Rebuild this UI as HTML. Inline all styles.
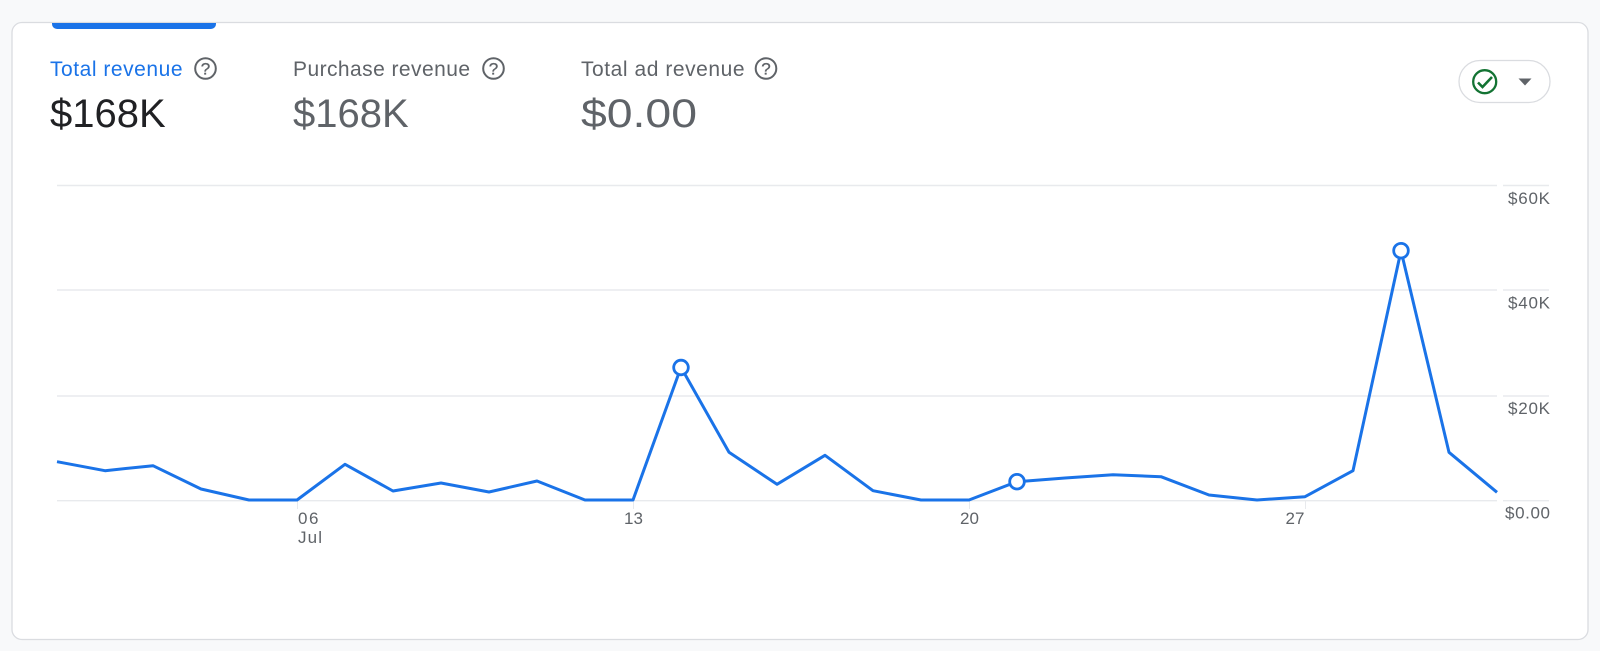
<!DOCTYPE html>
<html><head><meta charset="utf-8">
<style>
html,body{margin:0;padding:0;width:1600px;height:651px;overflow:hidden;background:#f8f9fa}
svg{position:absolute;left:0;top:0;display:block}
text{font-family:"Liberation Sans",Arial,sans-serif}
</style></head>
<body>
<svg width="1600" height="651" viewBox="0 0 1600 651" xmlns="http://www.w3.org/2000/svg">
<rect x="12" y="22.5" width="1576" height="617" rx="10" fill="#fff" stroke="#dadce0" stroke-width="1.3"/>
<path d="M52 23H216V24a5 5 0 0 1-5 5H57a5 5 0 0 1-5-5Z" fill="#1a73e8"/>

<text x="50" y="76" font-size="21" textLength="132.500" lengthAdjust="spacing" fill="#1a73e8">Total revenue</text>
<text x="293" y="76" font-size="21" textLength="177" lengthAdjust="spacing" fill="#5f6368">Purchase revenue</text>
<text x="581" y="76" font-size="21" textLength="163.500" lengthAdjust="spacing" fill="#5f6368">Total ad revenue</text>
<text x="50" y="127" font-size="40" fill="#202124">$168K</text>
<text x="293" y="127" font-size="40" fill="#5f6368">$168K</text>
<text x="581" y="127" font-size="40" textLength="116" lengthAdjust="spacingAndGlyphs" fill="#5f6368">$0.00</text>

<g fill="none" stroke="#5f6368" stroke-width="2">
<circle cx="205.500" cy="68.500" r="10.300"/>
<circle cx="493.500" cy="68.500" r="10.300"/>
<circle cx="766" cy="68.500" r="10.300"/>
</g>
<g font-size="17" fill="#5f6368" stroke="#5f6368" stroke-width="0.300" text-anchor="middle">
<text x="205.500" y="74.500">?</text>
<text x="493.500" y="74.500">?</text>
<text x="766" y="74.500">?</text>
</g>

<rect x="1459" y="60.500" width="91" height="42" rx="21" fill="#fff" stroke="#dadce0" stroke-width="1.300"/>
<circle cx="1484.700" cy="81.700" r="11.500" fill="none" stroke="#137333" stroke-width="2.300"/>
<path d="M1478 82.500l4.500 4.500 9.500-10" fill="none" stroke="#137333" stroke-width="2.600"/>
<path d="M1518.500 78.500h13l-6.500 7Z" fill="#5f6368"/>

<g stroke="#e8eaed" stroke-width="1.400" fill="none">
<path d="M57 185.500H1497M1503 185.500H1549"/>
<path d="M57 290H1497M1503 290H1549"/>
<path d="M57 396H1497M1503 396H1549"/>
<path d="M57 500.700H1497M1503 500.700H1549"/>
</g>
<g stroke="#e8eaed" stroke-width="1" fill="none">
<path d="M297.500 501V509M633.500 501V509M969.500 501V509M1305.500 501V509"/>
</g>

<g font-size="17" fill="#5f6368">
<text x="1508" y="204" textLength="42" lengthAdjust="spacing">$60K</text>
<text x="1508" y="308.500" textLength="42" lengthAdjust="spacing">$40K</text>
<text x="1508" y="414" textLength="42" lengthAdjust="spacing">$20K</text>
<text x="1505" y="518.500" textLength="45" lengthAdjust="spacing">$0.00</text>
<text x="298" y="524" textLength="20.500" lengthAdjust="spacing">06</text>
<text x="298" y="543" textLength="24" lengthAdjust="spacing">Jul</text>
<text x="633.500" y="524" text-anchor="middle">13</text>
<text x="969.500" y="524" text-anchor="middle">20</text>
<text x="1295" y="524" text-anchor="middle">27</text>
</g>

<polyline fill="none" stroke="#1a73e8" stroke-width="3" stroke-linejoin="round" points="57,461.700 105,470.700 153,465.700 201,489 249,500 297,500 345,464.300 393,491 441,483 489,492 537,481 585,500 633,500 681,367.300 729,452.300 777,484.300 825,455.300 873,490.700 921,500 969,500 1017,481.700 1065,478 1113,474.700 1161,476.700 1209,495 1257,500 1305,496.700 1353,470.700 1401,250.700 1449,452.300 1497,492.300"/>
<g fill="#fff" stroke="#1a73e8" stroke-width="2.800">
<circle cx="681" cy="367.500" r="7.300"/>
<circle cx="1017" cy="481.700" r="7.300"/>
<circle cx="1401" cy="250.700" r="7.300"/>
</g>
</svg>
</body></html>
